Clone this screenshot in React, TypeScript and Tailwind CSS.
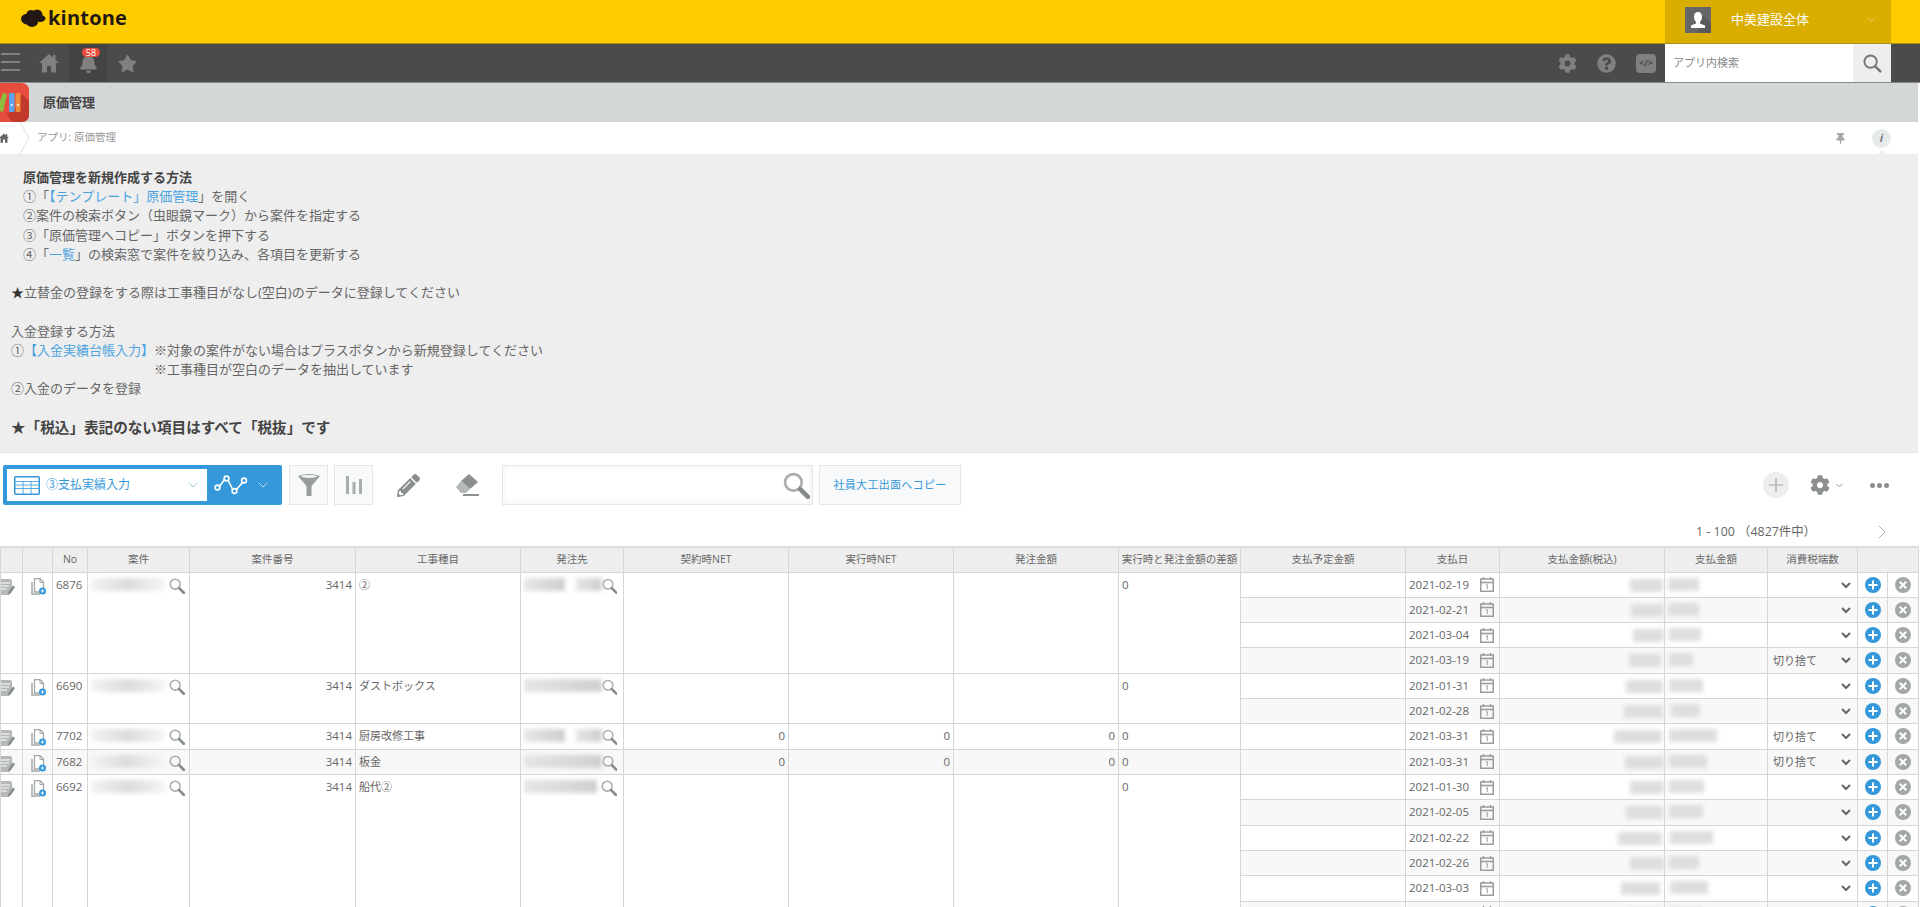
import { ChevronDown, ChevronRight } from 'lucide-react'
import { FaBell, FaCog, FaPencilAlt, FaQuestionCircle, FaStar, FaThumbtack } from 'react-icons/fa'

interface Payment {
  date: string
  tax: number
  taxPad: number
  amount: number
  amountPad: number
  rounding?: string
}

interface Group {
  no: number
  kind: string
  project: number
  vendor: number
  vendorGap?: boolean
  zero?: boolean
  payments: Payment[]
}

const groups: Group[] = [
  {
    no: 6876, kind: '②', project: 74, vendor: 80, vendorGap: true,
    payments: [
      { date: '2021-02-19', tax: 33, taxPad: 1, amount: 31, amountPad: 3 },
      { date: '2021-02-21', tax: 33, taxPad: 0, amount: 31, amountPad: 3 },
      { date: '2021-03-04', tax: 31, taxPad: 0, amount: 32, amountPad: 4 },
      { date: '2021-03-19', tax: 32, taxPad: 3, amount: 24, amountPad: 4, rounding: '切り捨て' },
    ],
  },
  {
    no: 6690, kind: 'ダストボックス', project: 74, vendor: 80,
    payments: [
      { date: '2021-01-31', tax: 37, taxPad: 1, amount: 34, amountPad: 4 },
      { date: '2021-02-28', tax: 39, taxPad: 1, amount: 29, amountPad: 6 },
    ],
  },
  {
    no: 7702, kind: '厨房改修工事', project: 73, vendor: 80, vendorGap: true, zero: true,
    payments: [{ date: '2021-03-31', tax: 48, taxPad: 2, amount: 48, amountPad: 4, rounding: '切り捨て' }],
  },
  {
    no: 7682, kind: '板金', project: 73, vendor: 80, zero: true,
    payments: [{ date: '2021-03-31', tax: 39, taxPad: 0, amount: 38, amountPad: 4, rounding: '切り捨て' }],
  },
  {
    no: 6692, kind: '船代②', project: 74, vendor: 73,
    payments: [
      { date: '2021-01-30', tax: 34, taxPad: 0, amount: 35, amountPad: 4 },
      { date: '2021-02-05', tax: 37, taxPad: 1, amount: 34, amountPad: 4 },
      { date: '2021-02-22', tax: 44, taxPad: 2, amount: 43, amountPad: 5 },
      { date: '2021-02-26', tax: 34, taxPad: 0, amount: 30, amountPad: 4 },
      { date: '2021-03-03', tax: 39, taxPad: 4, amount: 38, amountPad: 5 },
      // only the top of this row is on screen
      { date: '', tax: 36, taxPad: 1, amount: 33, amountPad: 4 },
    ],
  },
]

const headers = ['', '', 'No', '案件', '案件番号', '工事種目', '発注先', '契約時NET', '実行時NET', '発注金額', '実行時と発注金額の差額', '支払予定金額', '支払日', '支払金額(税込)', '支払金額', '消費税端数']

function Cloud() {
  return (
    <svg viewBox="0 0 26 20" className="w-[26px] h-[20px]" fill="#231815">
      <ellipse cx="8" cy="11" rx="7" ry="5.5" />
      <circle cx="11" cy="6.5" r="4.5" />
      <circle cx="17" cy="7" r="5.5" />
      <ellipse cx="20" cy="10.5" rx="5.5" ry="3.5" />
      <ellipse cx="12" cy="14" rx="6" ry="5" />
    </svg>
  )
}

function House({ className }: { className: string }) {
  return (
    <svg viewBox="0 0 20 20" className={className} fill="currentColor">
      <path d="M10 1 L14 4.6 V2 H16.5 V6.8 L20 10 H17 V19.5 H12 V13 H8 V19.5 H3 V10 H0 Z" />
    </svg>
  )
}

function Bust() {
  return (
    <svg viewBox="0 0 26 26" className="w-[26px] h-[26px]">
      <rect width="26" height="26" fill="#666" />
      <path d="M14 6 L26 16 V26 H14 Z" fill="#5a5a5a" />
      <path d="M13 5 C16 5 17 7.5 17 10 C17 12 16 14 15 15 V16.5 L20 18.5 V21 H6 V18.5 L11 16.5 V15 C10 14 9 12 9 10 C9 7.5 10 5 13 5 Z" fill="#fff" />
    </svg>
  )
}

function Glass({ className }: { className: string }) {
  return (
    <svg viewBox="0 0 26 26" className={className}>
      <circle cx="10" cy="10" r="8" fill="none" stroke="#a9aeae" strokeWidth="2.6" />
      <path d="M16.5 16.5 L24 24" stroke="#858a8a" strokeWidth="4.4" strokeLinecap="round" />
    </svg>
  )
}

function Binders() {
  return (
    <svg viewBox="0 0 29 39" className="w-[29px] h-[39px]">
      <path d="M0 0 H21 Q29 0 29 8 V31 Q29 39 21 39 H0 Z" fill="#e74c3c" />
      <path d="M12 29 L22 11 L29 18 V31 Q29 39 21 39 H12 L6 30 Z" fill="#c0392b" />
      <path d="M3 10 L7 11 L3 29 L0 28 V18 Z" fill="#8fbf3f" />
      <rect x="9" y="10" width="5.5" height="19" rx="1" fill="#5da5ea" />
      <rect x="15.5" y="10" width="5" height="19" rx="1" fill="#f08a3c" />
      <circle cx="11.7" cy="22" r="1" fill="#fff" />
      <circle cx="18" cy="22" r="1" fill="#fff" />
    </svg>
  )
}

function TableIcon() {
  return (
    <svg viewBox="0 0 26 19" className="w-[26px] h-[19px]" fill="none" stroke="#3498db">
      <rect x="0.75" y="0.75" width="24.5" height="17.5" rx="1" strokeWidth="1.5" />
      <path d="M1 5.5 H25 M1 9 H25 M1 12.5 H25 M9 5 V18 M17 5 V18" strokeWidth="0.8" />
    </svg>
  )
}

function GraphIcon() {
  return (
    <svg viewBox="0 0 34 20" className="w-[34px] h-[20px]" fill="none" stroke="#fff" strokeWidth="1.6">
      <path d="M5 12 L11 4 M14 5 L19 15 M22 15 L29 7" />
      <circle cx="3.5" cy="12.5" r="2.4" />
      <circle cx="12.5" cy="3.5" r="2.4" />
      <circle cx="20.5" cy="16" r="2.4" />
      <circle cx="30" cy="5.5" r="2.4" />
    </svg>
  )
}

function Funnel() {
  return (
    <svg viewBox="0 0 24 24" className="w-[24px] h-[24px]">
      <path d="M1 3 Q12 -1 23 3 L14.5 13 V23 H9.5 V13 Z" fill="#999c9c" />
      <ellipse cx="12" cy="3.4" rx="8" ry="1.5" fill="#f2f4f4" />
    </svg>
  )
}

function Bars() {
  return (
    <svg viewBox="0 0 16 18" className="w-[16px] h-[18px]" fill="#a9adad">
      <rect x="0" y="0" width="3" height="18" />
      <rect x="6.5" y="6" width="3" height="12" />
      <rect x="13" y="3" width="3" height="15" />
    </svg>
  )
}

function Eraser() {
  return (
    <svg viewBox="0 0 24 24" className="w-[24px] h-[24px]">
      <path d="M14 1 L23 9 L15 16 L6 8 Z" fill="#8b8f8f" />
      <path d="M6 8 L15 16 L11 20 H6 L1 14 Z" fill="#b5b8b8" />
      <rect x="8" y="21" width="16" height="2" fill="#8b8f8f" />
    </svg>
  )
}

function EditDoc() {
  return (
    <svg viewBox="0 0 16 16" className="w-[16px] h-[16px]">
      <path d="M1 0 H11 Q13 0 13 2 V9 L10 16 H1 Q0 16 0 15 V1 Q0 0 1 0 Z" fill="#b5b8b8" />
      <path d="M2 4 H11 M2 7 H10 M2 10 H8" stroke="#fff" strokeWidth="1" />
      <path d="M9.5 13 L14 6.5 L16 8 L11.5 14.5 L9 15.8 Z" fill="#858a8a" />
    </svg>
  )
}

function CopyDoc() {
  return (
    <svg viewBox="0 0 15 17" className="w-[15px] h-[17px]">
      <path d="M3.5 0.7 H9 L12.5 4 V14 H3.5 Z" fill="#fff" stroke="#a5a8a8" strokeWidth="1.3" />
      <path d="M1 4 V16 H9" fill="none" stroke="#a5a8a8" strokeWidth="1.5" />
      <path d="M9 1 V4.5 H12.5" fill="none" stroke="#a5a8a8" />
      <circle cx="11.5" cy="13" r="3.5" fill="#3498db" />
      <path d="M9.8 13 H13.2 M11.5 11.3 V14.7" stroke="#fff" strokeWidth="0.9" />
    </svg>
  )
}

function CalendarIcon() {
  return (
    <svg viewBox="0 0 14 15" className="w-[14px] h-[15px]" fill="none" stroke="#9a9d9d">
      <rect x="0.75" y="2" width="12.5" height="12.25" strokeWidth="1.5" />
      <path d="M0.5 5.5 H13.5" strokeWidth="1.6" />
      <path d="M3.5 0 V3 M10.5 0 V3" strokeWidth="1.4" />
      <path d="M6 8 L7.2 7.5 V12" strokeWidth="1" />
    </svg>
  )
}

function PlusCircle() {
  return (
    <svg viewBox="0 0 16 16" className="w-[16px] h-[16px]">
      <circle cx="8" cy="8" r="8" fill="#3498db" />
      <path d="M3.5 8 H12.5 M8 3.5 V12.5" stroke="#fff" strokeWidth="2" />
    </svg>
  )
}

function CloseCircle() {
  return (
    <svg viewBox="0 0 16 16" className="w-[16px] h-[16px]">
      <circle cx="8" cy="8" r="8" fill="#a4a7a7" />
      <path d="M4.8 4.8 L11.2 11.2 M11.2 4.8 L4.8 11.2" stroke="#fff" strokeWidth="2" />
    </svg>
  )
}

function Blur({ width, tone = 'mid' }: { width: number; tone?: 'light' | 'mid' | 'ramp' }) {
  const fill = {
    light: 'bg-gradient-to-r from-[#f3f3f3] via-[#dcdcdc] to-[#f5f5f5]',
    mid: 'bg-[#dedede]',
    ramp: 'bg-gradient-to-r from-[#e6e6e6] to-[#cfcfcf]',
  }[tone]
  return <div className={'h-[13px] blur-[2px] ' + fill} style={{ width }} />
}

function Notice() {
  return (
    <div className="h-[299px] pt-[14px] pl-[11px] bg-[#eeeeee] border-b border-[#e6e6e6] text-[13px] leading-[19.2px] text-[#666]">
      <div className="pl-[12px]">
        <p className="font-bold text-[#444]">原価管理を新規作成する方法</p>
        <p>①「<span className="text-[#4aa3df]">【テンプレート」原価管理</span>」を開く</p>
        <p>②案件の検索ボタン（虫眼鏡マーク）から案件を指定する</p>
        <p>③「原価管理へコピー」ボタンを押下する</p>
        <p>④「<span className="text-[#4aa3df]">一覧</span>」の検索窓で案件を絞り込み、各項目を更新する</p>
      </div>
      <p className="mt-[19.2px]"><span className="text-[#333]">★</span>立替金の登録をする際は工事種目がなし(空白)のデータに登録してください</p>
      <p className="mt-[19.2px]">入金登録する方法</p>
      <p>①<span className="text-[#4aa3df]">【入金実績台帳入力】</span>※対象の案件がない場合はプラスボタンから新規登録してください</p>
      <p className="pl-[143px]">※工事種目が空白のデータを抽出しています</p>
      <p>②入金のデータを登録</p>
      <p className="mt-[20px] text-[14.6px] font-bold text-[#444]">★「税込」表記のない項目はすべて「税抜」です</p>
    </div>
  )
}

function Toolbar() {
  return (
    <div className="h-[93px] bg-white pt-[12px] relative">
      <div className="flex items-start pl-[3px] pr-[29px]">
        <div className="flex h-[40px] w-[279px] rounded-[2px] bg-[#3498db] p-[4px_0_4px_4px]">
          <div className="flex h-[32px] w-[200px] items-center gap-[6px] bg-white pl-[7px] pr-[6px] text-[12px] text-[#3498db]">
            <TableIcon />
            <span className="flex-1">③支払実績入力</span>
            <ChevronDown size={16} strokeWidth={1.5} className="text-[#9cc9e8]" />
          </div>
          <div className="flex flex-1 items-center pl-[7px] gap-[7px]">
            <GraphIcon />
            <ChevronDown size={16} strokeWidth={1.5} className="text-[#b9ddf3]" />
          </div>
        </div>
        <button className="ml-[7px] flex h-[40px] w-[39px] items-center justify-center border border-[#e3e7e8] bg-[#f7f9fa]">
          <Funnel />
        </button>
        <button className="ml-[6px] flex h-[40px] w-[39px] items-center justify-center border border-[#e3e7e8] bg-[#f7f9fa]">
          <Bars />
        </button>
        <div className="ml-[24px] flex h-[40px] w-[24px] items-center">
          <FaPencilAlt size={23} className="text-[#8b8f8f]" />
        </div>
        <div className="ml-[34px] flex h-[40px] w-[24px] items-center">
          <Eraser />
        </div>
        <div className="ml-[23px] flex h-[40px] w-[311px] items-center justify-end border border-[#e3e7e8] bg-white pr-[2px] shadow-[inset_0_0_6px_#eee]">
          <Glass className="w-[27px] h-[27px]" />
        </div>
        <button className="ml-[6px] h-[40px] w-[142px] border border-[#e3e7e8] bg-[#f7f9fa] text-[11px] tracking-[0.3px] text-[#3498db]">
          社員大工出面へコピー
        </button>
        <div className="ml-auto flex h-[40px] items-center">
          <div className="flex h-[26px] w-[26px] items-center justify-center rounded-full bg-[#eeeeee]">
            <svg viewBox="0 0 14 14" className="w-[14px] h-[14px]"><path d="M0 7 H14 M7 0 V14" stroke="#a4a7a7" strokeWidth="1.2" /></svg>
          </div>
          <FaCog size={20} className="ml-[21px] text-[#8b8f8f]" />
          <ChevronDown size={11} strokeWidth={2} className="ml-[4px] text-[#8b8f8f]" />
          <div className="ml-[25px] flex gap-[2px]">
            <span className="h-[5px] w-[5px] rounded-full bg-[#8b8f8f]" />
            <span className="h-[5px] w-[5px] rounded-full bg-[#8b8f8f]" />
            <span className="h-[5px] w-[5px] rounded-full bg-[#8b8f8f]" />
          </div>
        </div>
      </div>
      <div className="absolute right-[24px] top-[67px] flex items-center text-[12.4px] text-[#666]">
        <span className="mr-[54px]">1 - 100 （4827件中）</span>
        <ChevronRight size={24} strokeWidth={1} className="text-[#aaa]" />
      </div>
    </div>
  )
}

function DataTable() {
  const cell = 'border border-[#d6d6d6] p-0 align-top'
  const td = cell + ' pt-[4px] px-[3px] leading-[16px]'
  return (
    <table className="w-[1918px] table-fixed border-collapse border-t-2 border-t-[#dddddd] text-[11.5px] text-[#666]">
      <colgroup>
        <col className="w-[22px]" />
        <col className="w-[30px]" />
        <col className="w-[35px]" />
        <col className="w-[102px]" />
        <col className="w-[166px]" />
        <col className="w-[165px]" />
        <col className="w-[103px]" />
        <col className="w-[165px]" />
        <col className="w-[165px]" />
        <col className="w-[165px]" />
        <col className="w-[122px]" />
        <col className="w-[165px]" />
        <col className="w-[94px]" />
        <col className="w-[165px]" />
        <col className="w-[103px]" />
        <col className="w-[90px]" />
        <col className="w-[30px]" />
        <col className="w-[31px]" />
      </colgroup>
      <thead>
        <tr className="h-[25px] bg-[#eeeeee]">
          {headers.map((h, i) => (
            <th key={i} className="border border-[#d6d6d6] p-0 text-center text-[10.5px] font-normal whitespace-nowrap">{h}</th>
          ))}
          <th colSpan={2} className="border border-[#d6d6d6] p-0" />
        </tr>
      </thead>
      <tbody>
        {groups.map((g) => {
          const striped = g.no === 7682
          const span = g.payments.length
          return g.payments.map((p, i) => (
            <tr key={g.no + '-' + i} className={i % 2 === 1 || striped ? 'h-[25.33px] bg-[#f8f8f8]' : 'h-[25.33px] bg-white'}>
              {i === 0 && (
                <>
                  <td rowSpan={span} className={cell + ' overflow-hidden'}>
                    <div className="pt-[6px] -ml-[2px]"><EditDoc /></div>
                  </td>
                  <td rowSpan={span} className={cell}>
                    <div className="pt-[5px] pl-[8px]"><CopyDoc /></div>
                  </td>
                  <td rowSpan={span} className={td}>{g.no}</td>
                  <td rowSpan={span} className={cell}>
                    <div className="flex items-start pl-[3px] pt-[5px]">
                      <Blur width={g.project} tone="light" />
                      <Glass className="ml-auto mr-[4px] w-[16px] h-[16px]" />
                    </div>
                  </td>
                  <td rowSpan={span} className={td + ' text-right'}>3414</td>
                  <td rowSpan={span} className={td + ' text-[11px]'}>{g.kind}</td>
                  <td rowSpan={span} className={cell}>
                    <div className="flex items-start pl-[3px] pt-[5px]">
                      {g.vendorGap ? (
                        <>
                          <Blur width={42} tone="ramp" />
                          <div className="w-[12px]" />
                          <Blur width={26} tone="ramp" />
                        </>
                      ) : (
                        <Blur width={g.vendor} tone="ramp" />
                      )}
                      <Glass className="ml-auto mr-[6px] w-[16px] h-[16px]" />
                    </div>
                  </td>
                  <td rowSpan={span} className={td + ' text-right'}>{g.zero ? 0 : ''}</td>
                  <td rowSpan={span} className={td + ' text-right'}>{g.zero ? 0 : ''}</td>
                  <td rowSpan={span} className={td + ' text-right'}>{g.zero ? 0 : ''}</td>
                  <td rowSpan={span} className={td}>0</td>
                </>
              )}
              <td className={cell} />
              <td className={cell}>
                <div className="flex items-center justify-between pl-[3px] pr-[5px] pt-[4px]">
                  <span className="leading-[16px]">{p.date}</span>
                  <CalendarIcon />
                </div>
              </td>
              <td className={cell}>
                <div className="flex justify-end pt-[6px]" style={{ paddingRight: p.taxPad }}>
                  <Blur width={p.tax} />
                </div>
              </td>
              <td className={cell}>
                <div className="pt-[5px]" style={{ paddingLeft: p.amountPad }}>
                  <Blur width={p.amount} />
                </div>
              </td>
              <td className={cell}>
                <select
                  defaultValue={p.rounding ?? ''}
                  className="h-[24px] w-[calc(100%-3px)] bg-transparent pl-[1px] text-[11px] text-[#666] outline-none"
                >
                  <option value=""></option>
                  <option value="切り捨て">切り捨て</option>
                </select>
              </td>
              <td className={cell}>
                <div className="flex justify-center pt-[4px]"><PlusCircle /></div>
              </td>
              <td className={cell}>
                <div className="flex justify-center pt-[4px]"><CloseCircle /></div>
              </td>
            </tr>
          ))
        })}
      </tbody>
    </table>
  )
}

export default function App() {
  return (
    <div className="h-[907px] overflow-hidden bg-white font-['Open_Sans','Noto_Sans_CJK_JP',sans-serif]">
      {/* Header */}
      <div className="flex h-[44px] border-b border-[#a88f1a] bg-[#ffcc00]">
        <div className="flex items-center pl-[20px] pb-[7px] gap-[2px]">
          <Cloud />
          <span className="text-[20px] font-bold leading-none tracking-[0.2px] text-[#231815]">kintone</span>
        </div>
        <div className="ml-auto mr-[29px] flex w-[226px] items-center bg-[#d9ae00] pl-[20px] pb-[4px]">
          <Bust />
          <span className="ml-[20px] text-[13px] text-white">中美建設全体</span>
          <ChevronDown size={15} strokeWidth={1.5} className="ml-auto mr-[12px] text-[#ecd36a]" />
        </div>
      </div>

      {/* Global nav */}
      <div className="flex h-[39px] border-b border-[#8a8a8a] bg-[#4b4b4b] text-[#808080]">
        <div className="flex w-[30px] flex-col justify-center gap-[6px] pl-[1px] pb-[2px]">
          <span className="h-[2px] w-[19px] bg-[#808080]" />
          <span className="h-[2px] w-[19px] bg-[#808080]" />
          <span className="h-[2px] w-[19px] bg-[#808080]" />
        </div>
        <div className="flex w-[39px] items-center pl-[9px]"><House className="w-[20px] h-[20px]" /></div>
        <div className="relative flex w-[38px] items-center justify-center bg-[#444444]">
          <FaBell size={19} />
          <span className="absolute left-[13px] top-[4px] flex h-[9px] w-[18px] items-center justify-center rounded-full bg-[#e74c3c] text-[9px] leading-none text-white">58</span>
        </div>
        <div className="flex w-[40px] items-center pl-[11px]"><FaStar size={19} /></div>
        <div className="ml-auto flex items-center">
          <FaCog size={19} />
          <FaQuestionCircle size={19} className="ml-[20px]" />
          <div className="ml-[20px] flex h-[19px] w-[20px] items-center justify-center rounded-[4px] bg-[#808080] text-[9px] font-bold text-[#4b4b4b]">&lt;/&gt;</div>
        </div>
        <div className="ml-[9px] mr-[29px] flex w-[226px]">
          <div className="flex flex-1 items-center bg-white pl-[8px] text-[11px] text-[#888]">アプリ内検索</div>
          <div className="flex w-[38px] items-center justify-center bg-[#eeeeee]">
            <svg viewBox="0 0 20 20" className="w-[19px] h-[19px]" fill="none" stroke="#777"><circle cx="8" cy="8" r="6.5" strokeWidth="2" /><path d="M13 13 L19 19" strokeWidth="2.6" /></svg>
          </div>
        </div>
      </div>

      <div className="mr-[2px]">
        {/* App title */}
        <div className="flex h-[39px] items-center bg-[#d4d7d8]">
          <Binders />
          <span className="ml-[14px] text-[13px] font-bold text-[#444]">原価管理</span>
        </div>

        {/* Breadcrumb */}
        <div className="relative flex h-[32px] items-center bg-white">
          <House className="-ml-[1px] w-[10px] h-[10px] text-[#666]" />
          <svg viewBox="0 0 10 32" className="ml-[11px] w-[10px] h-[32px]" fill="none" stroke="#dddddd"><path d="M0 0 L9 16 L0 32" /></svg>
          <span className="ml-[7px] text-[10.5px] text-[#999]">アプリ: 原価管理</span>
          <FaThumbtack size={11} className="ml-auto mr-[26px] text-[#a4a7a7]" />
          <div className="mr-[27px] flex h-[19px] w-[19px] items-center justify-center rounded-full bg-[#e6eaeb] text-[11px] font-bold italic text-[#777]">i</div>
          <span className="absolute bottom-0 right-[32px] border-x-[4px] border-b-[4px] border-x-transparent border-b-[#eeeeee]" />
        </div>

        <Notice />
        <Toolbar />
        <DataTable />
      </div>
    </div>
  )
}
